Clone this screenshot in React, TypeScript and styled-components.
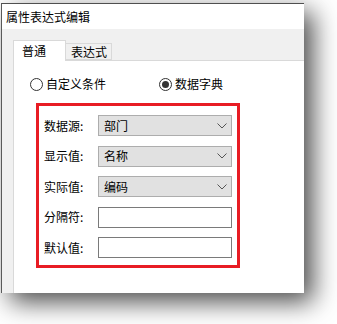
import * as React from "react";
import styled, { createGlobalStyle } from "styled-components";

const GlobalStyle = createGlobalStyle`
  body {
    margin: 0;
    background: #ffffff;
    font-family: "Noto Sans CJK SC", "Noto Sans", sans-serif;
    font-size: 12px;
    color: #000;
  }
`;

const Page = styled.div`
  width: 337px;
  height: 324px;
  overflow: hidden;
  padding: 3px 0 0 1px;
  box-sizing: border-box;
`;

const Window = styled.div`
  width: 303px;
  height: 290px;
  box-sizing: border-box;
  border-top: 1px solid #4f4f4f;
  border-left: 1px solid #5a5a5a;
  display: flex;
  flex-direction: column;
  background: #f0f0f0;
  box-shadow: 9px 9px 24px rgba(0, 0, 0, 0.7);
`;

const TitleBar = styled.div`
  height: 25px;
  flex-shrink: 0;
  background: #ffffff;
  display: flex;
  align-items: center;
  padding-left: 4px;
  line-height: 1;
`;

const Body = styled.div`
  flex: 1;
  display: flex;
  flex-direction: column;
  padding: 11px 0 0 11px;
  min-height: 0;
`;

const TabStrip = styled.div`
  display: flex;
  align-items: flex-end;
  height: 20px;
  position: relative;
  z-index: 1;
`;

const Tab = styled.div<{ $active?: boolean }>`
  box-sizing: border-box;
  border: 1px solid #d9d9d9;
  border-bottom: ${(p) => (p.$active ? "none" : "1px solid #d9d9d9")};
  background: ${(p) => (p.$active ? "#ffffff" : "#f0f0f0")};
  height: ${(p) => (p.$active ? "21px" : "17px")};
  margin-bottom: ${(p) => (p.$active ? "-1px" : "0")};
  margin-left: ${(p) => (p.$active ? "0" : "-1px")};
  padding: ${(p) => (p.$active ? "0 19px 0 8px" : "0 4px 0 5px")};
  display: flex;
  align-items: center;
  line-height: 1;
`;

const Panel = styled.div`
  flex: 1;
  background: #ffffff;
  border-top: 1px solid #d9d9d9;
  border-left: 1px solid #d9d9d9;
  padding: 16px 0 0 16px;
`;

const RadioRow = styled.div`
  display: flex;
  align-items: center;
  height: 14px;
`;

const RadioItem = styled.label<{ $width?: number }>`
  display: flex;
  align-items: center;
  width: ${(p) => (p.$width ? `${p.$width}px` : "auto")};
  line-height: 1;
`;

const RadioCircle = styled.span<{ $checked?: boolean }>`
  width: 13px;
  height: 13px;
  box-sizing: border-box;
  border: 1px solid #333;
  border-radius: 50%;
  display: flex;
  align-items: center;
  justify-content: center;
  margin-right: 3px;
  &::after {
    content: "";
    display: ${(p) => (p.$checked ? "block" : "none")};
    width: 7px;
    height: 7px;
    border-radius: 50%;
    background: #333;
  }
`;

const Highlight = styled.div`
  margin: 12px 0 0 6px;
  width: 204px;
  box-sizing: border-box;
  border: 3px solid #e81c24;
  padding: 9px 5px 7px 5px;
  display: flex;
  flex-direction: column;
  gap: 9.6px;
`;

const Row = styled.div`
  display: flex;
  align-items: center;
  height: 21px;
`;

const Label = styled.span`
  width: 54px;
  line-height: 1;
`;

const Select = styled.div`
  width: 134px;
  height: 21px;
  box-sizing: border-box;
  background: #e1e1e1;
  border: 1px solid #adadad;
  display: flex;
  align-items: center;
  justify-content: space-between;
  padding: 0 4px 0 5px;
  line-height: 1;
`;

const TextBox = styled.div`
  width: 134px;
  height: 21px;
  box-sizing: border-box;
  background: #ffffff;
  border: 1px solid #7a7a7a;
`;

const Chevron = () => (
  <svg width="10" height="6" viewBox="0 0 10 6">
    <path d="M0.5 0.5 L5 5 L9.5 0.5" fill="none" stroke="#555" strokeWidth="1" />
  </svg>
);

const fields: { label: string; value?: string }[] = [
  { label: "数据源:", value: "部门" },
  { label: "显示值:", value: "名称" },
  { label: "实际值:", value: "编码" },
  { label: "分隔符:" },
  { label: "默认值:" },
];

export default function App() {
  return (
    <>
      <GlobalStyle />
      <Page>
        <Window>
          <TitleBar>属性表达式编辑</TitleBar>
          <Body>
            <TabStrip>
              <Tab $active>普通</Tab>
              <Tab>表达式</Tab>
            </TabStrip>
            <Panel>
              <RadioRow>
                <RadioItem $width={129}>
                  <RadioCircle />
                  自定义条件
                </RadioItem>
                <RadioItem>
                  <RadioCircle $checked />
                  数据字典
                </RadioItem>
              </RadioRow>
              <Highlight>
                {fields.map((f) => (
                  <Row key={f.label}>
                    <Label>{f.label}</Label>
                    {f.value ? (
                      <Select>
                        {f.value}
                        <Chevron />
                      </Select>
                    ) : (
                      <TextBox />
                    )}
                  </Row>
                ))}
              </Highlight>
            </Panel>
          </Body>
        </Window>
      </Page>
    </>
  );
}
